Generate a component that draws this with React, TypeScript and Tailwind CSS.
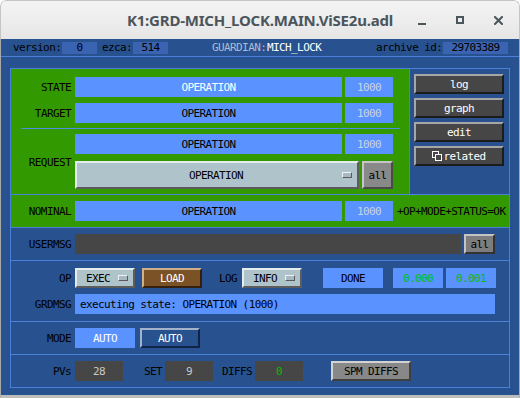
import type { ReactNode } from "react";

const mono = "font-['DejaVu_Sans_Mono',monospace] text-[11px] tracking-[-0.6px] leading-none";

function Label({ children, className = "" }: { children: ReactNode; className?: string }) {
  return <div className={`w-[60px] shrink-0 text-right text-black mr-[4px] ${className}`}>{children}</div>;
}

function Field({
  children,
  className = "",
}: {
  children?: ReactNode;
  className?: string;
}) {
  return (
    <div className={`h-[20px] shrink-0 flex items-center justify-center ${className}`}>{children}</div>
  );
}

function Menu({ label, className = "" }: { label: string; className?: string }) {
  return (
    <div
      className={`relative h-[20px] shrink-0 flex items-center bg-[#afc3cb] border-2 border-t-[#e4ecee] border-l-[#e4ecee] border-b-[#5c5c5c] border-r-[#5c5c5c] text-black ${className}`}
    >
      <span className="flex-1 text-center">{label}</span>
      <span className="absolute right-[5px] top-1/2 -translate-y-1/2 w-[10px] h-[6px] bg-[#a8b8c0] border border-t-[#eef2f4] border-l-[#eef2f4] border-b-[#5a5a5a] border-r-[#5a5a5a]" />
    </div>
  );
}

function Bevel({
  children,
  className = "",
}: {
  children: ReactNode;
  className?: string;
}) {
  return <div className={`shrink-0 flex items-center justify-center border-2 ${className}`}>{children}</div>;
}

function SideButton({ children }: { children: ReactNode }) {
  return (
    <Bevel className="w-[90px] h-[20px] bg-[#464646] text-white border-t-[#a6a6a6] border-l-[#a6a6a6] border-b-[#1c1c1c] border-r-[#1c1c1c]">
      {children}
    </Bevel>
  );
}

export default function App() {
  return (
    <div className="w-[520px] h-[398px] bg-white overflow-hidden">
      <div className="w-[520px] h-[398px] flex flex-col rounded-t-[6px] overflow-hidden">
        {/* title bar */}
        <div className="relative h-[39px] shrink-0 flex items-center justify-center bg-gradient-to-b from-[#f4f4f4] to-[#e6e6e6] border border-b-0 border-[#c4c4c4] rounded-t-[6px]">
          <span className="font-['Noto_Sans',sans-serif] font-bold text-[15px] text-[#4b555c] pt-[1px] tracking-[-0.2px]">
            K1:GRD-MICH_LOCK.MAIN.ViSE2u.adl
          </span>
          <div className="absolute right-0 top-0 h-full flex items-center">
            <div className="w-[8px] h-[2px] bg-[#4b555c] mt-[7px] mr-[30px]" />
            <div className="w-[8px] h-[8px] border-2 border-[#4b555c] mr-[30px]" />
            <svg width="9" height="9" viewBox="0 0 9 9" className="mr-[16px]">
              <path d="M1 1 L8 8 M8 1 L1 8" stroke="#4b555c" strokeWidth="2" strokeLinecap="square" />
            </svg>
          </div>
        </div>

        {/* body */}
        <div className={`flex-1 flex flex-col bg-[#27528f] border-x border-b-[3px] border-l-[#a9a9a9] border-r-[#a9a9a9] border-b-[#bdbdbd] ${mono}`}>
          {/* header strip */}
          <div className="h-[18px] shrink-0 flex items-center border-b border-[#4b80d8] text-black">
            <span className="ml-[12px] w-[49px]">version:</span>
            <span className="w-[35px] h-[12px] bg-[#3a63b2] flex items-center justify-center">0</span>
            <span className="ml-[5px] w-[31px]">ezca:</span>
            <span className="w-[35px] h-[12px] bg-[#3a63b2] flex items-center justify-center">514</span>
            <span className="ml-[44px] w-[55px] text-[#aebbd0]">GUARDIAN:</span>
            <span className="text-white">MICH_LOCK</span>
            <span className="ml-auto w-[67px]">archive id:</span>
            <span className="w-[65px] h-[12px] bg-[#3a63b2] flex items-center justify-center mr-[11px]">29703389</span>
          </div>

          {/* frame */}
          <div className="ml-[9px] mt-[11px] w-[500px] h-[320px] border border-[#4b80d8] flex flex-col">
            {/* section 1 */}
            <div className="h-[125px] shrink-0 flex">
              <div className="w-[399px] bg-[#339900] border-r border-[#4b80d8] pt-[8px] flex flex-col">
                <div className="flex items-center">
                  <Label>STATE</Label>
                  <Field className="w-[267px] bg-[#5a93ff] text-white">OPERATION</Field>
                  <Field className="ml-[3px] w-[48px] bg-[#5a93ff] text-[#c8d4e4]">1000</Field>
                </div>
                <div className="flex items-center mt-[6px]">
                  <Label>TARGET</Label>
                  <Field className="w-[267px] bg-[#5a93ff] text-black">OPERATION</Field>
                  <Field className="ml-[3px] w-[48px] bg-[#5a93ff] text-[#c8d4e4]">1000</Field>
                </div>
                <div className="ml-[10px] mt-[5px] w-[379px] h-px bg-[#4b8ee4]" />
                <div className="flex items-center mt-[5px]">
                  <Label className="mt-[1px]">REQUEST</Label>
                  <div className="flex flex-col">
                    <div className="flex">
                      <Field className="w-[267px] bg-[#5a93ff] text-black">OPERATION</Field>
                      <Field className="ml-[3px] w-[48px] bg-[#5a93ff] text-[#c8d4e4]">1000</Field>
                    </div>
                    <div className="flex mt-[7px]">
                      <Menu label="OPERATION" className="w-[284px] !h-[28px] pr-[2px]" />
                      <Bevel className="ml-[3px] w-[31px] h-[28px] bg-[#898989] text-black border-t-[#c6c6c6] border-l-[#c6c6c6] border-b-[#4a4a4a] border-r-[#4a4a4a]">
                        all
                      </Bevel>
                    </div>
                  </div>
                </div>
              </div>
              <div className="flex-1 pl-[4px] pt-[5px] flex flex-col gap-[4px]">
                <SideButton>log</SideButton>
                <SideButton>graph</SideButton>
                <SideButton>edit</SideButton>
                <SideButton>
                  <svg width="10" height="10" viewBox="0 0 10 10" className="mr-[1px]">
                    <rect x="0.5" y="0.5" width="6" height="6" fill="none" stroke="white" />
                    <rect x="3.5" y="3.5" width="6" height="6" fill="#464646" stroke="white" />
                  </svg>
                  related
                </SideButton>
              </div>
            </div>

            {/* nominal */}
            <div className="h-[33px] shrink-0 flex items-center bg-[#339900] border-t border-[#4b80d8]">
              <Label>NOMINAL</Label>
              <Field className="w-[267px] bg-[#5a93ff] text-black">OPERATION</Field>
              <Field className="ml-[3px] w-[48px] bg-[#5a93ff] text-[#c8d4e4]">1000</Field>
              <span className="ml-[4px] text-black">+OP+MODE+STATUS=OK</span>
            </div>

            {/* usermsg */}
            <div className="h-[33px] shrink-0 flex items-center border-t border-[#4b80d8]">
              <Label>USERMSG</Label>
              <Field className="w-[386px] bg-[#464646]" />
              <Bevel className="ml-[3px] w-[31px] h-[20px] bg-[#7d7d7d] text-black border-t-[#c4c4c4] border-l-[#c4c4c4] border-b-[#333333] border-r-[#333333]">
                all
              </Bevel>
            </div>

            {/* op / grdmsg */}
            <div className="h-[61px] shrink-0 flex flex-col border-t border-[#4b80d8] pt-[7px]">
              <div className="flex items-center">
                <Label>OP</Label>
                <Menu label="EXEC" className="w-[60px] pr-[14px]" />
                <Bevel className="ml-[7px] w-[60px] h-[20px] bg-[#7a5226] text-white border-t-[#cfb08a] border-l-[#cfb08a] border-b-[#352010] border-r-[#352010]">
                  LOAD
                </Bevel>
                <span className="ml-[17px] w-[23px]">LOG</span>
                <Menu label="INFO" className="w-[60px] pr-[14px]" />
                <Field className="ml-[21px] w-[60px] bg-[#5a93ff] text-black">DONE</Field>
                <Field className="ml-[10px] w-[50px] bg-[#5a93ff] text-[#00c000]">0.000</Field>
                <Field className="ml-[3px] w-[50px] bg-[#5a93ff] text-[#00c000]">0.001</Field>
              </div>
              <div className="flex items-center mt-[6px]">
                <Label>GRDMSG</Label>
                <Field className="w-[420px] bg-[#5a93ff] text-black !justify-start pl-[5px]">
                  executing state: OPERATION (1000)
                </Field>
              </div>
            </div>

            {/* mode */}
            <div className="h-[33px] shrink-0 flex items-center border-t border-[#4b80d8]">
              <Label>MODE</Label>
              <Field className="w-[60px] bg-[#5a93ff] text-white">AUTO</Field>
              <Bevel className="ml-[5px] w-[60px] h-[20px] bg-[#28528e] text-white border-t-[#a3b3cb] border-l-[#a3b3cb] border-b-[#0f2448] border-r-[#0f2448]">
                AUTO
              </Bevel>
            </div>

            {/* pvs */}
            <div className="h-[33px] shrink-0 flex items-center border-t border-[#4b80d8]">
              <Label>PVs</Label>
              <Field className="w-[48px] bg-[#464646] text-[#c8c8c8]">28</Field>
              <span className="ml-[21px] w-[21px]">SET</span>
              <Field className="w-[48px] bg-[#464646] text-[#c8c8c8]">9</Field>
              <span className="ml-[9px] w-[33px]">DIFFS</span>
              <Field className="w-[48px] bg-[#464646] text-[#00c000]">0</Field>
              <Bevel className="ml-[28px] w-[80px] h-[20px] bg-[#888888] text-black border-t-[#d2d2d2] border-l-[#d2d2d2] border-b-[#404040] border-r-[#404040]">
                SPM DIFFS
              </Bevel>
            </div>
          </div>
        </div>
      </div>
    </div>
  );
}
